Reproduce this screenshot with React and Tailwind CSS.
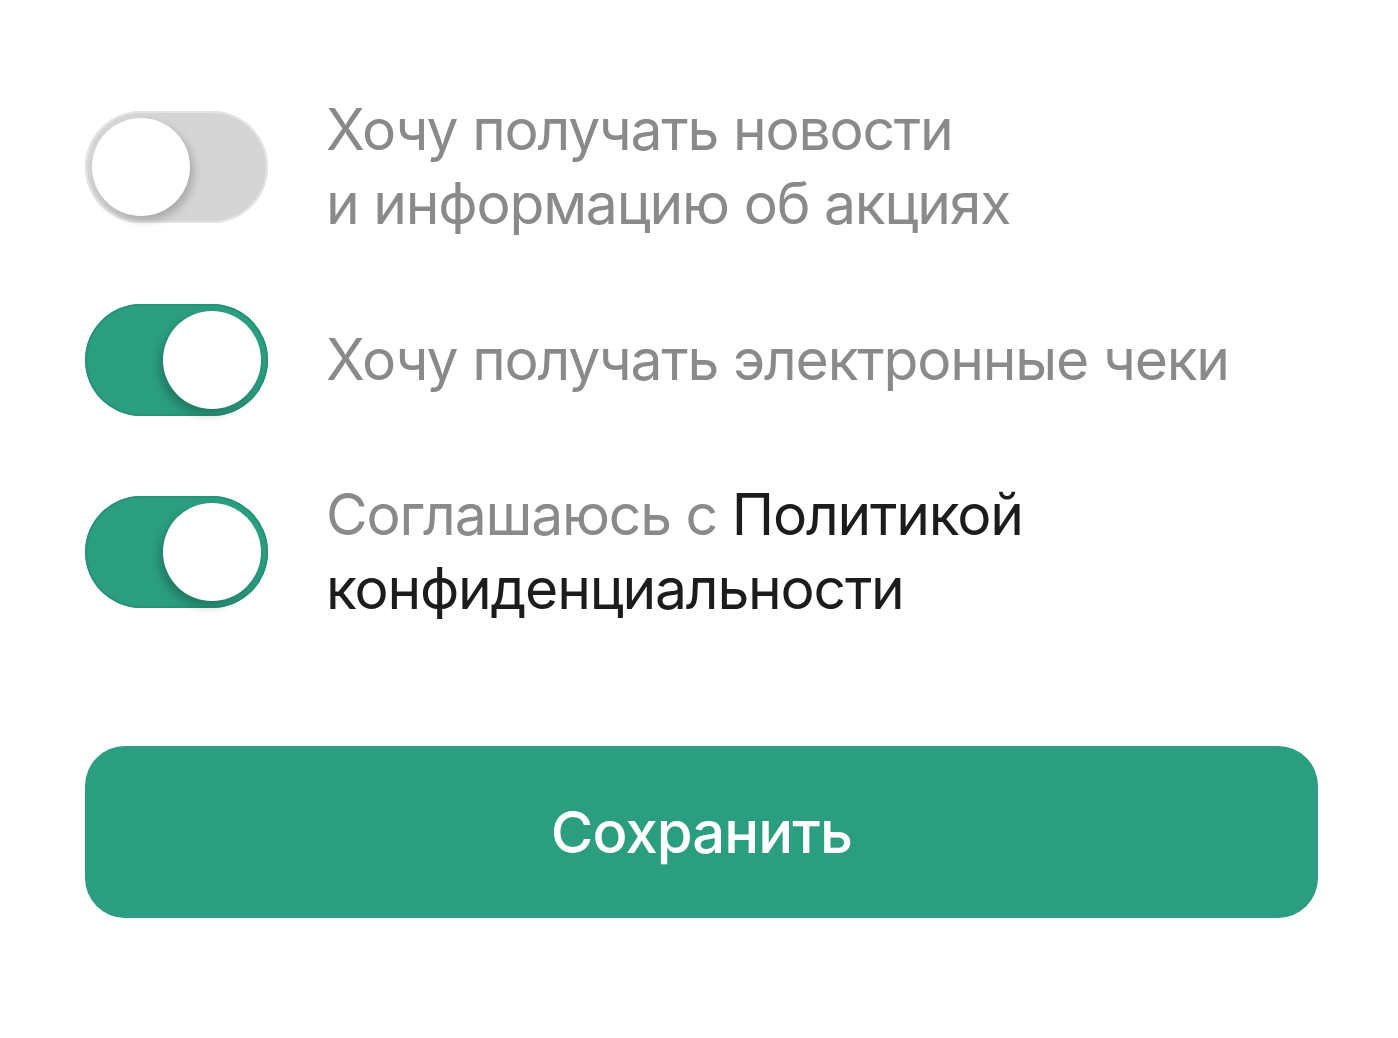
import { useState } from "react";

function Toggle({ on, onClick }) {
  return (
    <button
      type="button"
      onClick={onClick}
      className={
        "relative shrink-0 w-[183px] h-[112px] rounded-full transition-colors " +
        (on ? "bg-[#2b9e80] shadow-[inset_0_0_0_2px_#27927a]" : "bg-[#d5d5d5] shadow-[inset_0_0_0_2px_#e4e4e4]")
      }
    >
      <span
        className={
          "absolute top-[7px] w-[98px] h-[98px] rounded-full bg-white transition-all " +
          (on
            ? "left-[78px] shadow-[-4px_6px_8px_rgba(0,0,0,0.22)]"
            : "left-[7px] shadow-[4px_5px_8px_rgba(0,0,0,0.2)]")
        }
      />
    </button>
  );
}

export default function App() {
  const [news, setNews] = useState(false);
  const [checks, setChecks] = useState(true);
  const [policy, setPolicy] = useState(true);

  return (
    <div
      className="w-[1398px] h-[1038px] bg-white pl-[85px] pr-[80px] pt-[93px]"
      style={{ fontFamily: "Inter, 'Noto Sans', sans-serif" }}
    >
      <div className="flex flex-col gap-[62.5px]">
        <div className="flex items-center gap-[58px]">
          <Toggle on={news} onClick={() => setNews(!news)} />
          <p className="text-[57px] leading-[74px] text-[#8a8a8a] tracking-[-1.2px]">
            Хочу получать новости
            <br />
            и информацию об акциях
          </p>
        </div>
        <div className="flex items-center gap-[58px]">
          <Toggle on={checks} onClick={() => setChecks(!checks)} />
          <p className="text-[57px] leading-[74px] text-[#8a8a8a] tracking-[-1.2px]">
            Хочу получать электронные чеки
          </p>
        </div>
        <div className="flex items-center gap-[58px]">
          <Toggle on={policy} onClick={() => setPolicy(!policy)} />
          <p className="text-[57px] leading-[74px] text-[#8a8a8a] tracking-[-1.2px]">
            Соглашаюсь с <span className="text-[#1c1c1c]">Политикой</span>
            <br />
            <span className="text-[#1c1c1c]">конфиденциальности</span>
          </p>
        </div>
      </div>
      <button
        type="button"
        className="mt-[120px] w-full h-[172px] rounded-[40px] bg-[#2b9e80] text-white text-[58px] font-medium tracking-[-0.9px]"
      >
        Сохранить
      </button>
    </div>
  );
}
